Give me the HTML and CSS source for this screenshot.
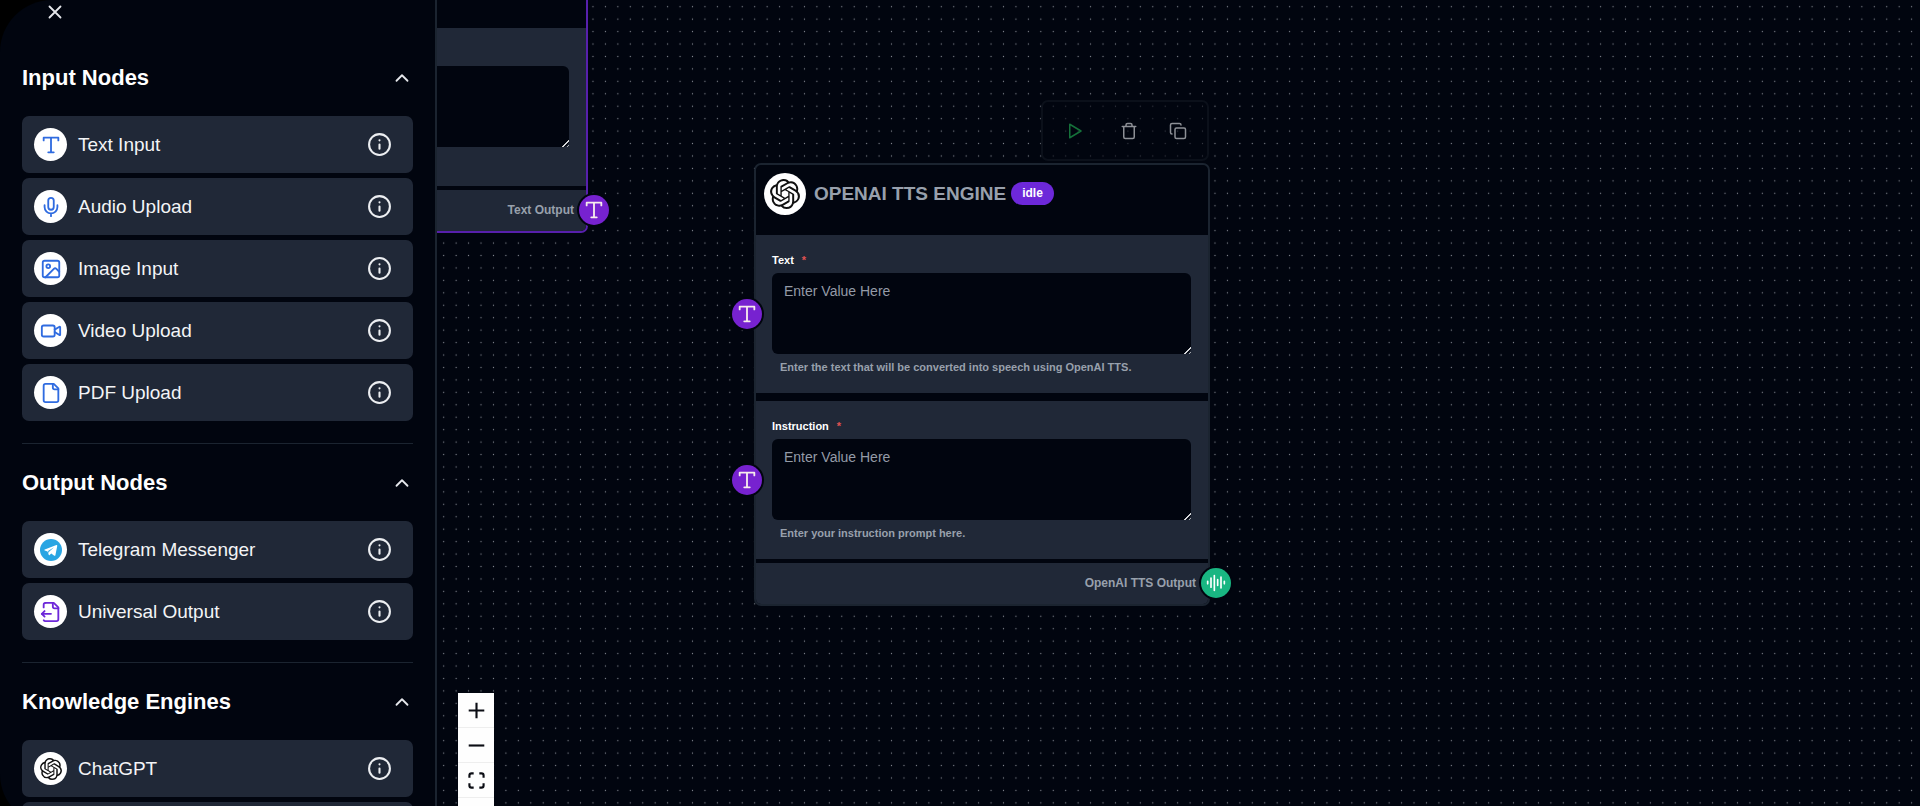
FILE: index.html
```html
<!DOCTYPE html>
<html lang="en">
<head>
<meta charset="utf-8">
<title>Workflow editor</title>
<link rel="stylesheet" href="styles.css">
</head>
<body>
<svg class="sprite" aria-hidden="true">
  <symbol id="i-x" viewBox="0 0 24 24"><path d="M18 6 6 18M6 6l12 12"/></symbol>
  <symbol id="i-chevron" viewBox="0 0 24 24"><path d="m18 15-6-6-6 6"/></symbol>
  <symbol id="i-info" viewBox="0 0 24 24"><circle cx="12" cy="12" r="10"/><path d="M12 16v-4M12 8h.01"/></symbol>
  <symbol id="i-type" viewBox="0 0 24 24"><path d="M4 7V4h16v3M9 20h6M12 4v16"/></symbol>
  <symbol id="i-mic" viewBox="0 0 24 24"><path d="M12 2a3 3 0 0 0-3 3v7a3 3 0 0 0 6 0V5a3 3 0 0 0-3-3Z"/><path d="M19 10v2a7 7 0 0 1-14 0v-2M12 19v3"/></symbol>
  <symbol id="i-image" viewBox="0 0 24 24"><rect x="3" y="3" width="18" height="18" rx="2"/><circle cx="9" cy="9" r="2"/><path d="m21 15-3.086-3.086a2 2 0 0 0-2.828 0L6 21"/></symbol>
  <symbol id="i-video" viewBox="0 0 24 24"><path d="m16 13 5.223 3.482a.5.5 0 0 0 .777-.416V7.87a.5.5 0 0 0-.752-.432L16 10.5"/><rect x="2" y="6" width="14" height="12" rx="2"/></symbol>
  <symbol id="i-file" viewBox="0 0 24 24"><path d="M15 2H6a2 2 0 0 0-2 2v16a2 2 0 0 0 2 2h12a2 2 0 0 0 2-2V7Z"/><path d="M14 2v4a2 2 0 0 0 2 2h4"/></symbol>
  <symbol id="i-output" viewBox="0 0 24 24"><path d="M14 2v4a2 2 0 0 0 2 2h4"/><path d="M4 7V4a2 2 0 0 1 2-2 2 2 0 0 0-2 2"/><path d="M4.063 20.999a2 2 0 0 0 2 1L18 22a2 2 0 0 0 2-2V7l-5-5H6"/><path d="m5 11-3 3"/><path d="m5 17-3-3h10"/></symbol>
  <symbol id="i-telegram" viewBox="0 0 24 24"><circle cx="12" cy="12" r="12" fill="#29a5e3" stroke="none"/><path fill="#fff" stroke="none" d="M17.9 6.6 5.2 11.5c-.6.2-.6.8 0 1l3.1 1 1.2 3.8c.2.5.6.6 1 .2l1.8-1.7 3.3 2.4c.5.3 1 .1 1.2-.5l2-10.2c.1-.7-.3-1.100-.9-.9zM9.900 13.900l-.3 2-.8-2.800 6.500-4.100z"/></symbol>
  <symbol id="i-audio" viewBox="0 0 24 24"><path d="M2 10v3M6 6v11M10 3v18M14 8v7M18 5v13M22 10v3"/></symbol>
  <symbol id="i-play" viewBox="0 0 24 24"><path d="m5 3 15 9-15 9Z"/></symbol>
  <symbol id="i-trash" viewBox="0 0 24 24"><path d="M3 6h18M19 6v14a2 2 0 0 1-2 2H7a2 2 0 0 1-2-2V6M8 6V4a2 2 0 0 1 2-2h4a2 2 0 0 1 2 2v2"/></symbol>
  <symbol id="i-copy" viewBox="0 0 24 24"><rect x="8" y="8" width="14" height="14" rx="2"/><path d="M4 16a2 2 0 0 1-2-2V4a2 2 0 0 1 2-2h10a2 2 0 0 1 2 2"/></symbol>
  <symbol id="i-plus" viewBox="0 0 24 24"><path d="M12 1v22M1 12h22"/></symbol>
  <symbol id="i-minus" viewBox="0 0 24 24"><path d="M1 12h22"/></symbol>
  <symbol id="i-fit" viewBox="0 0 24 24"><path d="M2 8V5a3 3 0 0 1 3-3h3M16 2h3a3 3 0 0 1 3 3v3M22 16v3a3 3 0 0 1-3 3h-3M8 22H5a3 3 0 0 1-3-3v-3"/></symbol>
  <symbol id="i-openai" viewBox="0 0 24 24"><path fill="currentColor" stroke="none" d="M22.2819 9.8211a5.9847 5.9847 0 0 0-.5157-4.9108 6.0462 6.0462 0 0 0-6.5098-2.9A6.0651 6.0651 0 0 0 4.9807 4.1818a5.9847 5.9847 0 0 0-3.9977 2.9 6.0462 6.0462 0 0 0 .7427 7.0966 5.98 5.98 0 0 0 .511 4.9107 6.051 6.051 0 0 0 6.5146 2.9001A5.9847 5.9847 0 0 0 13.2599 24a6.0557 6.0557 0 0 0 5.7718-4.2058 5.9894 5.9894 0 0 0 3.9977-2.9001 6.0557 6.0557 0 0 0-.7475-7.0729zm-9.022 12.6081a4.4755 4.4755 0 0 1-2.8764-1.0408l.1419-.0804 4.7783-2.7582a.7948.7948 0 0 0 .3927-.6813v-6.7369l2.02 1.1686a.071.071 0 0 1 .038.052v5.5826a4.504 4.504 0 0 1-4.4945 4.4944zm-9.6607-4.1254a4.4708 4.4708 0 0 1-.5346-3.0137l.142.0852 4.783 2.7582a.7712.7712 0 0 0 .7806 0l5.8428-3.3685v2.3324a.0804.0804 0 0 1-.0332.0615L9.74 19.9502a4.4992 4.4992 0 0 1-6.1408-1.6464zM2.3408 7.8956a4.485 4.485 0 0 1 2.3655-1.9728V11.6a.7664.7664 0 0 0 .3879.6765l5.8144 3.3543-2.0201 1.1685a.0757.0757 0 0 1-.071 0l-4.8303-2.7865A4.504 4.504 0 0 1 2.3408 7.872zm16.5963 3.8558L13.1038 8.364 15.1192 7.2a.0757.0757 0 0 1 .071 0l4.8303 2.7913a4.4944 4.4944 0 0 1-.6765 8.1042v-5.6772a.79.79 0 0 0-.407-.667zm2.0107-3.0231l-.142-.0852-4.7735-2.7818a.7759.7759 0 0 0-.7854 0L9.409 9.2297V6.8974a.0662.0662 0 0 1 .0284-.0615l4.8303-2.7866a4.4992 4.4992 0 0 1 6.6802 4.66zM8.3065 12.863l-2.02-1.1638a.0804.0804 0 0 1-.038-.0567V6.0742a4.4992 4.4992 0 0 1 7.3757-3.4537l-.142.0805L8.704 5.459a.7948.7948 0 0 0-.3927.6813zm1.0976-2.3654l2.602-1.4998 2.6069 1.4998v2.9994l-2.5974 1.4997-2.6067-1.4997Z"/></symbol>
</svg>

<div class="app">
  <aside class="sidebar">
    <button class="close" type="button" aria-label="Close panel"><svg class="icon"><use href="#i-x"/></svg></button>

    <section class="group">
      <h2 class="group-title"><button class="toggle" type="button" aria-expanded="true">Input Nodes<svg class="icon"><use href="#i-chevron"/></svg></button></h2>
      <ul class="cards">
        <li class="card"><span class="disc blue"><svg class="icon"><use href="#i-type"/></svg></span><span class="card-name">Text Input</span><button class="info" type="button" aria-label="About Text Input"><svg class="icon"><use href="#i-info"/></svg></button></li>
        <li class="card"><span class="disc blue"><svg class="icon"><use href="#i-mic"/></svg></span><span class="card-name">Audio Upload</span><button class="info" type="button" aria-label="About Audio Upload"><svg class="icon"><use href="#i-info"/></svg></button></li>
        <li class="card"><span class="disc blue"><svg class="icon"><use href="#i-image"/></svg></span><span class="card-name">Image Input</span><button class="info" type="button" aria-label="About Image Input"><svg class="icon"><use href="#i-info"/></svg></button></li>
        <li class="card"><span class="disc blue"><svg class="icon"><use href="#i-video"/></svg></span><span class="card-name">Video Upload</span><button class="info" type="button" aria-label="About Video Upload"><svg class="icon"><use href="#i-info"/></svg></button></li>
        <li class="card"><span class="disc blue"><svg class="icon"><use href="#i-file"/></svg></span><span class="card-name">PDF Upload</span><button class="info" type="button" aria-label="About PDF Upload"><svg class="icon"><use href="#i-info"/></svg></button></li>
      </ul>
    </section>

    <section class="group">
      <h2 class="group-title"><button class="toggle" type="button" aria-expanded="true">Output Nodes<svg class="icon"><use href="#i-chevron"/></svg></button></h2>
      <ul class="cards">
        <li class="card"><span class="disc"><svg class="icon"><use href="#i-telegram"/></svg></span><span class="card-name">Telegram Messenger</span><button class="info" type="button" aria-label="About Telegram Messenger"><svg class="icon"><use href="#i-info"/></svg></button></li>
        <li class="card"><span class="disc violet"><svg class="icon"><use href="#i-output"/></svg></span><span class="card-name">Universal Output</span><button class="info" type="button" aria-label="About Universal Output"><svg class="icon"><use href="#i-info"/></svg></button></li>
      </ul>
    </section>

    <section class="group">
      <h2 class="group-title"><button class="toggle" type="button" aria-expanded="true">Knowledge Engines<svg class="icon"><use href="#i-chevron"/></svg></button></h2>
      <ul class="cards">
        <li class="card"><span class="disc"><svg class="icon"><use href="#i-openai"/></svg></span><span class="card-name">ChatGPT</span><button class="info" type="button" aria-label="About ChatGPT"><svg class="icon"><use href="#i-info"/></svg></button></li>
        <li class="card"></li>
      </ul>
    </section>
  </aside>

  <main class="canvas">
    <svg class="dots" aria-hidden="true">
      <defs><pattern id="grid" x=".48" y=".48" width="12.44" height="12.44" patternUnits="userSpaceOnUse"><circle cx="6.220" cy="6.220" r=".62" fill="#858992"/></pattern></defs>
      <rect width="100%" height="100%" fill="url(#grid)"/>
    </svg>

    <article class="node node-text selected">
      <header class="node-head"></header>
      <div class="field">
        <div class="field-label"></div>
        <textarea class="box" aria-label="Text value"></textarea>
        <p class="hint"></p>
      </div>
      <footer class="node-foot">Text Output<span class="port port-out"><svg class="icon"><use href="#i-type"/></svg></span></footer>
    </article>

    <div class="toolbar">
      <button class="tool run" type="button" aria-label="Run"><svg class="icon"><use href="#i-play"/></svg></button>
      <button class="tool" type="button" aria-label="Delete"><svg class="icon"><use href="#i-trash"/></svg></button>
      <button class="tool" type="button" aria-label="Duplicate"><svg class="icon"><use href="#i-copy"/></svg></button>
    </div>

    <article class="node node-tts">
      <header class="node-head">
        <span class="logo"><svg class="icon"><use href="#i-openai"/></svg></span>
        <h3 class="node-title">OPENAI TTS ENGINE</h3>
        <span class="badge">idle</span>
      </header>
      <div class="field">
        <label class="field-label" for="tts-text">Text <span class="req">*</span></label>
        <textarea class="box" id="tts-text" placeholder="Enter Value Here"></textarea>
        <p class="hint">Enter the text that will be converted into speech using OpenAI TTS.</p>
        <span class="port port-in"><svg class="icon"><use href="#i-type"/></svg></span>
      </div>
      <div class="field">
        <label class="field-label" for="tts-instruction">Instruction <span class="req">*</span></label>
        <textarea class="box" id="tts-instruction" placeholder="Enter Value Here"></textarea>
        <p class="hint">Enter your instruction prompt here.</p>
        <span class="port port-in"><svg class="icon"><use href="#i-type"/></svg></span>
      </div>
      <footer class="node-foot">OpenAI TTS Output<span class="port port-out green"><svg class="icon"><use href="#i-audio"/></svg></span></footer>
    </article>

    <div class="controls">
      <button class="control" type="button" aria-label="Zoom in"><svg class="icon"><use href="#i-plus"/></svg></button>
      <button class="control" type="button" aria-label="Zoom out"><svg class="icon"><use href="#i-minus"/></svg></button>
      <button class="control" type="button" aria-label="Fit view"><svg class="icon"><use href="#i-fit"/></svg></button>
      <button class="control" type="button" aria-label="Lock"></button>
    </div>
  </main>
</div>
</body>
</html>
```
FILE: styles.css
```css
* { box-sizing: border-box; }

:root {
  --ink: #01050f;
  --panel: #202837;
  --line: #1b2430;
  --muted: #98a0ac;
  --purple: #7722d0;
}

body {
  margin: 0;
  height: 100vh;
  overflow: hidden;
  background: #000;
  color: #fff;
  font-family: "Liberation Sans", Arial, sans-serif;
}

h2, h3, p, ul { margin: 0; padding: 0; }
ul { list-style: none; }

button {
  padding: 0;
  border: 0;
  background: none;
  color: inherit;
  font: inherit;
  cursor: pointer;
}

.sprite { position: absolute; width: 0; height: 0; }

.icon {
  display: block;
  flex: none;
  width: 22px;
  height: 22px;
  fill: none;
  stroke: currentColor;
  stroke-width: 2;
  stroke-linecap: round;
  stroke-linejoin: round;
}

.app {
  display: flex;
  height: calc(100vh + 20px);
  border-radius: 52px 0 0 52px;
  overflow: hidden;
  background: var(--ink);
}

/* Sidebar */
.sidebar {
  flex: none;
  width: 437px;
  padding: 0 22px 0 22px;
  border-right: 2px solid var(--line);
  overflow: hidden;
}

.close {
  display: block;
  margin: 1px 0 16px 22px;
  color: #e5e7eb;
}

.group { padding-bottom: 22px; }
.group + .group { border-top: 1px solid var(--line); }

.toggle {
  display: flex;
  align-items: center;
  justify-content: space-between;
  width: 100%;
  height: 77px;
  font-size: 22px;
  font-weight: 700;
  text-align: left;
}
.toggle .icon { color: #e5e7eb; }

.cards { display: grid; gap: 5px; }

.card {
  display: flex;
  align-items: center;
  gap: 11px;
  height: 57px;
  padding: 0 21px 0 12px;
  border-radius: 7px;
  background: var(--panel);
}

.card-name { flex: 1; font-size: 19px; color: #f3f4f6; }

.disc {
  display: grid;
  place-items: center;
  width: 33px;
  height: 33px;
  border-radius: 50%;
  background: #fff;
  color: #111;
}
.disc.blue { color: #2f6be0; }
.disc.violet { color: #6d28d9; }

.info { color: #eceef1; }
.info .icon { width: 25px; height: 25px; }

/* Canvas */
.canvas { position: relative; flex: 1; overflow: hidden; }
.dots { display: block; width: 100%; height: 100%; }

.node {
  position: absolute;
  width: 456px;
  border: 2px solid var(--line);
  border-radius: 7px;
  background: var(--ink);
}
.node-text { left: -305px; top: -44px; }
.node-tts { left: 317px; top: 163px; }
.node.selected { border-color: #5720ac; }

.node-head {
  display: flex;
  align-items: flex-start;
  height: 70px;
  padding: 8px;
}

.logo {
  display: grid;
  place-items: center;
  width: 42px;
  height: 42px;
  border-radius: 50%;
  background: #fff;
  color: #111;
}
.logo .icon { width: 30px; height: 30px; }

.node-title {
  margin-left: 8px;
  font-size: 19px;
  line-height: 42px;
  color: var(--muted);
}

.badge {
  margin: 9px 0 0 5px;
  padding: 0 11px;
  border-radius: 12px;
  background: #6d28d9;
  font-size: 12px;
  font-weight: 700;
  line-height: 23px;
}

.field {
  position: relative;
  padding: 17px 17px 18px 16px;
  background: var(--panel);
}
.field + .field { margin-top: 8px; }

.field-label {
  display: flex;
  gap: 8px;
  height: 16px;
  margin-bottom: 5px;
  font-size: 11px;
  font-weight: 700;
  line-height: 16px;
}
.req { color: #e05252; }

.box {
  display: block;
  width: 100%;
  height: 81px;
  padding: 10px 12px;
  border: 0;
  border-radius: 6px;
  background: var(--ink);
  color: #fff;
  font: 14px/17px "Liberation Sans", Arial, sans-serif;
  resize: both;
}
.box::placeholder { color: #949ba7; }
.box::-webkit-resizer {
  background: linear-gradient(135deg, transparent 76%, #d5d7da 76% 83%, transparent 83% 91%, #a5a8ad 91% 94%, transparent 94%);
}

.hint {
  height: 16px;
  margin-top: 5px;
  padding-left: 8px;
  font-size: 11px;
  font-weight: 700;
  line-height: 16px;
  color: var(--muted);
}

.node-foot {
  position: relative;
  margin-top: 4px;
  padding-right: 12px;
  border-radius: 0 0 5px 5px;
  background: var(--panel);
  color: var(--muted);
  font-size: 12px;
  font-weight: 700;
  line-height: 41px;
  text-align: right;
}

.port {
  position: absolute;
  display: grid;
  place-items: center;
  width: 30px;
  height: 30px;
  border-radius: 50%;
  box-shadow: 0 0 0 2px var(--ink);
  background: var(--purple);
  color: #f7ecec;
}
.port .icon { width: 22px; height: 22px; }
.port-in { left: -24px; top: 64px; }
.port-out { right: -23px; top: 5px; }
.port.green { background: #19b682; color: #fff; }
.port.green .icon { width: 20px; height: 20px; }

.toolbar {
  position: absolute;
  left: 604px;
  top: 100px;
  display: flex;
  align-items: center;
  justify-content: space-between;
  width: 168px;
  height: 61px;
  padding: 0 20px 0 23px;
  border: 2px solid #0b101a;
  border-radius: 7px;
  background: rgb(1 5 15 / 60%);
}
.tool { color: #8d9096; }
.tool .icon { width: 18px; height: 18px; }
.tool.run { margin-right: 4px; color: #15713a; }

.controls {
  position: absolute;
  left: 21px;
  top: 693px;
  display: grid;
  width: 36px;
  background: #fefefe;
}
.control {
  display: grid;
  place-items: center;
  height: 35px;
  border-bottom: 1px solid #eee;
  color: #0b0d14;
}
.control .icon { width: 17px; height: 17px; stroke-width: 3; stroke-linecap: butt; }
```
